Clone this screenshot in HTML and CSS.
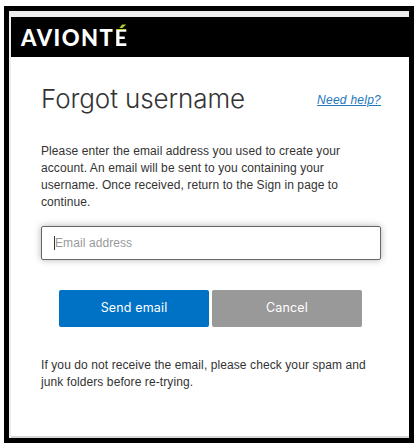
FILE: index.html
```html
<!DOCTYPE html>
<html lang="en">
<head>
  <meta charset="UTF-8">
  <title>Forgot username</title>
  <link rel="stylesheet" href="styles.css">
</head>
<body>
<div class="frame">
  <div class="panel">
    <div class="header">
      <div class="logo">AVIONT<span class="accent">É</span></div>
    </div>
    <div class="content">
      <div class="title-row">
        <h1>Forgot username</h1>
        <a class="help" href="#">Need help?</a>
      </div>
      <p class="intro">Please enter the email address you used to create your<br>account. An email will be sent to you containing your<br>username. Once received, return to the Sign in page to<br>continue.</p>
      <div class="field"><span class="caret"></span>Email address</div>
      <div class="buttons">
        <button class="btn btn-send">Send email</button>
        <button class="btn btn-cancel">Cancel</button>
      </div>
      <p class="note">If you do not receive the email, please check your spam and<br>junk folders before re-trying.</p>
    </div>
  </div>
</div>
</body>
</html>
```
FILE: styles.css
```css
body {
  margin: 0;
  background-color: white;
  color: #333;
  font-family: "Liberation Sans", Arial, sans-serif;
  font-size: 12px;
  letter-spacing: 0.09px;
  overflow: hidden;
}
.frame {
  box-sizing: border-box;
  width: 410px;
  height: 437px;
  margin: 6px 0 0 4px;
  border: 5px solid black;
  background-color: #eee;
  padding: 6px 0 0 2px;
}
.panel {
  box-sizing: border-box;
  height: 421px;
  background-color: white;
  border-bottom: 2px solid #d5d8d5;
}
.header {
  height: 40px;
  background-color: black;
}
.logo {
  padding-left: 10px;
  font-family: Lato, sans-serif;
  font-size: 22px;
  font-weight: 900;
  line-height: 41px;
  letter-spacing: 1.5px;
  color: white;
}
/* green acute over a white E */
.accent {
  background: linear-gradient(#b5cc34 0 6px, white 6px);
  background-clip: text;
  -webkit-background-clip: text;
  color: transparent;
}
.content {
  padding: 24px 28px 0 30px;
}
.title-row {
  display: flex;
  justify-content: space-between;
  height: 36px;
}
h1 {
  margin: 0;
  font-family: Inter, sans-serif;
  font-size: 26px;
  font-weight: 300;
  line-height: 36px;
  letter-spacing: -0.1px;
  white-space: nowrap;
}
.help {
  margin-top: 11px;
  font-style: italic;
  line-height: 16px;
  letter-spacing: 0.25px;
  color: #2277bb;
}
p {
  margin: 0;
  line-height: 17px;
  white-space: nowrap;
}
.intro {
  margin-top: 26px;
}
.field {
  display: flex;
  align-items: center;
  box-sizing: border-box;
  height: 34px;
  margin-top: 15px;
  padding-left: 12px;
  border: 1px solid #666;
  border-radius: 2px;
  box-shadow: 0 0 7px rgba(0, 0, 0, 0.3);
  color: #999;
}
.caret {
  width: 1px;
  height: 14px;
  background-color: #333;
}
.buttons {
  display: flex;
  gap: 3px;
  margin: 30px 0 0 18px;
}
.btn {
  width: 150px;
  height: 37px;
  padding: 0 0 2px;
  border: 0;
  border-radius: 2px;
  font-family: Inter, sans-serif;
  font-size: 12.5px;
  font-weight: 400;
  letter-spacing: 0.15px;
  color: white;
}
.btn-send {
  background-color: #0072c6;
}
.btn-cancel {
  background-color: #999;
}
.note {
  margin-top: 30px;
}
```
